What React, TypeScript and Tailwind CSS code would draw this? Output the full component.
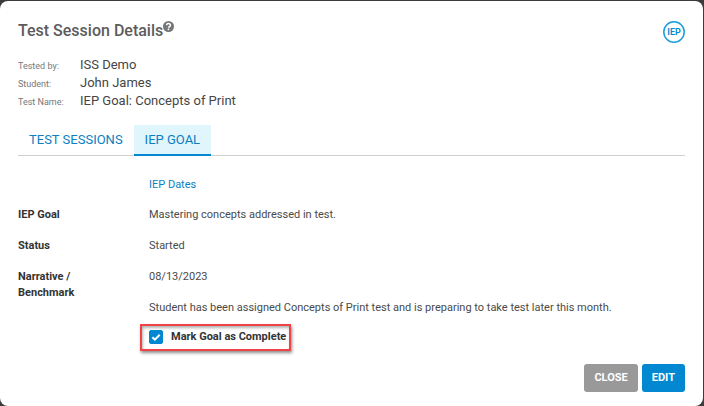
import * as React from 'react';
import { clsx } from 'clsx';

const sessionInfo = [
  { label: 'Tested by:', value: 'ISS Demo' },
  { label: 'Student:', value: 'John James' },
  { label: 'Test Name:', value: 'IEP Goal: Concepts of Print' },
];

const tabs = ['TEST SESSIONS', 'IEP GOAL'];

function HelpIcon() {
  return (
    <svg viewBox="0 0 16 16" className="h-[11px] w-[11px]" aria-hidden="true">
      <circle cx="8" cy="8" r="8" fill="#757575" />
      <path d="M5.2 6.2a2.8 2.5 0 1 1 4.2 2.1c-1 .6-1.4.8-1.4 1.5" fill="none" stroke="#fff" strokeWidth="2.2" />
      <rect x="6.9" y="11" width="2.2" height="2.2" fill="#fff" />
    </svg>
  );
}

function IepBadge() {
  return (
    <svg viewBox="0 0 22 22" className="h-[22px] w-[22px]" role="img" aria-label="IEP">
      <circle cx="11" cy="11" r="10.2" fill="none" stroke="#1a9ddb" strokeWidth="1.5" />
      <text x="11" y="14" textAnchor="middle" className="text-[9px] font-bold" fill="#0b8ccc">IEP</text>
    </svg>
  );
}

function DetailRow({ label, children }: { label: string; children: React.ReactNode }) {
  return (
    <div className="flex">
      <dt className="w-[131px] shrink-0 pr-10 font-bold text-[#333333]">{label}</dt>
      <dd className="min-w-0 flex-1">{children}</dd>
    </div>
  );
}

function GoalPanel() {
  const [complete, setComplete] = React.useState(true);

  return (
    <div role="tabpanel" className="pt-[21px] text-[11px] leading-4 text-[#4a4a4a]">
      <div className="pl-[131px]">
        <a href="#dates" className="text-[#0b7fc0]">IEP Dates</a>
      </div>

      <dl className="mt-[14px] flex flex-col gap-[15px]">
        <DetailRow label="IEP Goal">Mastering concepts addressed in test.</DetailRow>
        <DetailRow label="Status">Started</DetailRow>
        <DetailRow label="Narrative / Benchmark">
          <p>08/13/2023</p>
          <p className="mt-[15px]">
            Student has been assigned Concepts of Print test and is preparing to take test later this month.
          </p>
        </DetailRow>
      </dl>

      {/* Completion toggle */}
      <div className="mt-2 pl-[122px]">
        <label className="flex h-[27px] w-fit items-center gap-2 border-2 border-[#f04444] pr-[3px] pb-[2px] pl-[7px] font-bold text-[#333333] shadow-[1px_2px_3px_rgba(0,0,0,0.45),inset_1px_2px_3px_rgba(0,0,0,0.3)]">
          <span className="relative flex">
            <input
              type="checkbox"
              checked={complete}
              onChange={(e) => setComplete(e.target.checked)}
              className="h-[14px] w-[14px] appearance-none rounded-[2px] border border-[#0288d1] checked:bg-[#0288d1]"
            />
            {complete && (
              <svg viewBox="0 0 14 14" className="pointer-events-none absolute inset-0 h-[14px] w-[14px]" aria-hidden="true">
                <path d="M3.4 7.2l2.5 2.5 4.8-4.9" fill="none" stroke="#fff" strokeWidth="2" />
              </svg>
            )}
          </span>
          Mark Goal as Complete
        </label>
      </div>
    </div>
  );
}

export default function App() {
  const [activeTab, setActiveTab] = React.useState('IEP GOAL');

  return (
    <div className="min-h-screen bg-[#3b3a3c] pt-px pr-px font-[Roboto,sans-serif]">
      <div role="dialog" aria-labelledby="dialog-title" className="min-h-[calc(100vh-1px)] rounded-lg bg-white px-[18px] pt-5 pb-[13px]">
        {/* Header */}
        <header className="flex items-start justify-between">
          <div className="flex items-start">
            <h1 id="dialog-title" className="text-base leading-5 font-medium text-[#5c5c5c]">Test Session Details</h1>
            <button type="button" aria-label="Help">
              <HelpIcon />
            </button>
          </div>
          <IepBadge />
        </header>

        <dl className="mt-[13px]">
          {sessionInfo.map((item) => (
            <div key={item.label} className="flex h-[18px] items-baseline leading-[18px]">
              <dt className="w-[62px] text-[9px] text-[#777777]">{item.label}</dt>
              <dd className="text-[13px] text-[#454545]">{item.value}</dd>
            </div>
          ))}
        </dl>

        {/* Tabs */}
        <div role="tablist" className="mt-[15px] flex border-b border-[#d0d0d0]">
          {tabs.map((tab) => (
            <button
              key={tab}
              type="button"
              role="tab"
              aria-selected={activeTab === tab}
              onClick={() => setActiveTab(tab)}
              className={clsx(
                '-mb-px h-[31px] border-b-2 px-[11px] text-[13px] text-[#0b7fc0]',
                activeTab === tab ? 'border-[#0288d1] bg-[#e1f5fd]' : 'border-transparent'
              )}
            >
              {tab}
            </button>
          ))}
        </div>

        <GoalPanel />

        {/* Actions */}
        <footer className="mt-[13px] flex justify-end gap-1 text-[11px] font-bold text-white">
          <button type="button" className="h-7 rounded-[3px] bg-[#999999] px-[10px]">CLOSE</button>
          <button type="button" className="h-7 rounded-[3px] bg-[#0288d1] px-[10px]">EDIT</button>
        </footer>
      </div>
    </div>
  );
}
